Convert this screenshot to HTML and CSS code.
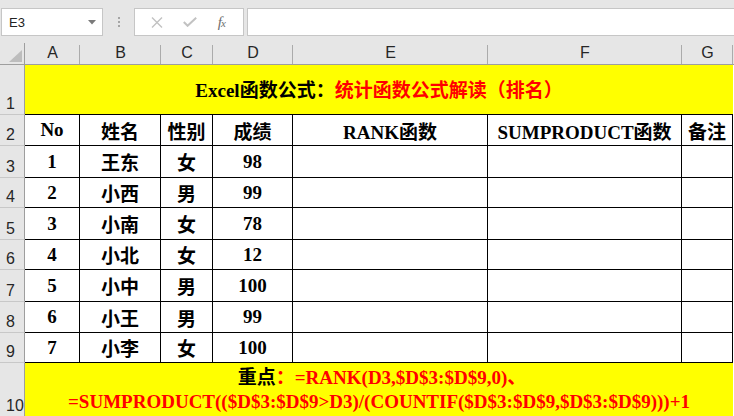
FILE: index.html
```html
<!DOCTYPE html>
<html lang="zh-CN">
<head>
<meta charset="utf-8">
<title>Excel</title>
<link rel="stylesheet" href="styles.css">
</head>
<body>
<div class="app">
  <div class="toolbar">
    <div class="namebox">
      <span class="ref">E3</span>
      <svg class="dd" width="8" height="5" viewBox="0 0 8 5"><path d="M0 0H8L4 4.5Z" fill="#7a7a7a"/></svg>
    </div>
    <div class="grip"><i></i><i></i><i></i></div>
    <div class="fxbox">
      <svg class="ico" width="12" height="11" viewBox="0 0 12 11"><path d="M1 0.5L11 10.5M11 0.5L1 10.5" stroke="#c2c2c2" stroke-width="1.4" fill="none"/></svg>
      <svg class="ico" width="14" height="10" viewBox="0 0 14 10"><path d="M0.8 5L4.6 8.8L13.2 0.8" stroke="#c2c2c2" stroke-width="2" fill="none"/></svg>
      <span class="fx">f<small>x</small></span>
    </div>
    <div class="formula"></div>
  </div>

  <div class="sheet">
    <div class="corner"><svg width="13" height="12" viewBox="0 0 13 12"><path d="M13 0V12H0Z" fill="#bdbdbd"/></svg></div>
    <div class="ch">A</div>
    <div class="ch">B</div>
    <div class="ch">C</div>
    <div class="ch">D</div>
    <div class="ch">E</div>
    <div class="ch">F</div>
    <div class="ch">G</div>
    <div class="ch last"></div>

    <div class="rh">1</div>
    <div class="title"><span class="blk">Excel函数公式：</span><span class="red">统计函数公式解读（排名）</span></div>
    <div class="pad"></div>

    <div class="rh">2</div>
    <div class="c">No</div>
    <div class="c">姓名</div>
    <div class="c">性别</div>
    <div class="c">成绩</div>
    <div class="c">RANK函数</div>
    <div class="c">SUMPRODUCT函数</div>
    <div class="c">备注</div>
    <div class="pad"></div>

    <div class="rh">3</div>
    <div class="c">1</div><div class="c">王东</div><div class="c">女</div><div class="c">98</div><div class="c"></div><div class="c"></div><div class="c"></div>
    <div class="pad"></div>

    <div class="rh">4</div>
    <div class="c">2</div><div class="c">小西</div><div class="c">男</div><div class="c">99</div><div class="c"></div><div class="c"></div><div class="c"></div>
    <div class="pad"></div>

    <div class="rh">5</div>
    <div class="c">3</div><div class="c">小南</div><div class="c">女</div><div class="c">78</div><div class="c"></div><div class="c"></div><div class="c"></div>
    <div class="pad"></div>

    <div class="rh">6</div>
    <div class="c">4</div><div class="c">小北</div><div class="c">女</div><div class="c">12</div><div class="c"></div><div class="c"></div><div class="c"></div>
    <div class="pad"></div>

    <div class="rh">7</div>
    <div class="c">5</div><div class="c">小中</div><div class="c">男</div><div class="c">100</div><div class="c"></div><div class="c"></div><div class="c"></div>
    <div class="pad"></div>

    <div class="rh">8</div>
    <div class="c">6</div><div class="c">小王</div><div class="c">男</div><div class="c">99</div><div class="c"></div><div class="c"></div><div class="c"></div>
    <div class="pad"></div>

    <div class="rh">9</div>
    <div class="c">7</div><div class="c">小李</div><div class="c">女</div><div class="c">100</div><div class="c"></div><div class="c"></div><div class="c"></div>
    <div class="pad"></div>

    <div class="rh">10</div>
    <div class="note">
      <span class="l1"><span class="blk">重点</span><span class="red">：=RANK(D3,$D$3:$D$9,0)、</span></span>
      <span class="l2 red">=SUMPRODUCT(($D$3:$D$9&gt;D3)/(COUNTIF($D$3:$D$9,$D$3:$D$9)))+1</span>
    </div>
    <div class="pad"></div>
  </div>
</div>
</body>
</html>
```

FILE: styles.css
```css
* { box-sizing: border-box; }
html, body { margin: 0; padding: 0; }
body {
  width: 734px;
  height: 416px;
  overflow: hidden;
  background: #e6e6e6;
  font-family: "Liberation Sans", "Noto Sans CJK SC", sans-serif;
}
.app { width: 734px; height: 416px; overflow: hidden; }

/* formula bar */
.toolbar {
  height: 43px;
  display: flex;
  align-items: flex-start;
  padding-top: 8px;
  padding-left: 1px;
}
.namebox {
  width: 102px;
  height: 28px;
  background: #fff;
  border: 1px solid #c6c6c6;
  display: flex;
  align-items: center;
  justify-content: space-between;
  padding: 0 6px 0 7px;
  font-size: 13px;
  color: #222;
}
.grip {
  width: 31px;
  height: 28px;
  display: flex;
  flex-direction: column;
  align-items: center;
  justify-content: center;
  gap: 2px;
}
.grip i { display: block; width: 2px; height: 2px; background: #a5a5a5; }
.fxbox {
  width: 110px;
  height: 28px;
  background: #fff;
  border: 1px solid #c6c6c6;
  display: flex;
  align-items: center;
  justify-content: space-around;
  padding: 0 8px 0 6px;
}
.fx {
  font-family: "Liberation Serif", serif;
  font-style: italic;
  font-size: 15px;
  color: #6e6e6e;
  letter-spacing: -1px;
}
.fx small { font-size: 11px; }
.formula {
  flex: 1;
  height: 28px;
  margin-left: 3px;
  background: #fff;
  border: 1px solid #c6c6c6;
  border-right: none;
}

/* sheet grid */
.sheet {
  display: grid;
  grid-template-columns: 25px 55px 81px 52px 80px 195px 194px 51px 1px;
  grid-template-rows: 22px 50px 31px 32px 30px 32px 30px 32px 31px 30px 54px;
  background: #fff;
}
.corner {
  background: #e6e6e6;
  border-right: 1px solid #9e9e9e;
  border-bottom: 1px solid #9e9e9e;
  display: flex;
  align-items: flex-end;
  justify-content: flex-end;
  padding: 0 2px 2px 0;
}
.ch {
  background: #e6e6e6 linear-gradient(#ababab, #ababab) right bottom / 1px 19px no-repeat;
  border-bottom: 1px solid #9e9e9e;
  display: flex;
  align-items: flex-end;
  justify-content: center;
  padding-bottom: 2px;
  font-size: 16px;
  line-height: 18px;
  color: #262626;
}
.ch.last { background: #e6e6e6; }
.rh {
  background: #e6e6e6;
  border-right: 1px solid #9e9e9e;
  border-bottom: 1px solid #c8c8c8;
  display: flex;
  align-items: flex-end;
  padding: 0 0 1px 6px;
  font-size: 16px;
  line-height: 18px;
  color: #262626;
}
.pad { background: #fff; }

.title, .note, .c {
  font-family: "Liberation Serif", "Noto Sans CJK SC", serif;
  font-weight: bold;
  font-size: 19px;
  color: #000;
}
.title {
  grid-column: span 7;
  background: #ffff00;
  border-bottom: 1px solid #000;
  display: flex;
  align-items: center;
  justify-content: center;
  padding-bottom: 3px;
}
.red { color: #ff0000; }
.blk { color: #000; }
.c {
  border-right: 1px solid #000;
  border-bottom: 1px solid #000;
  display: flex;
  align-items: center;
  justify-content: center;
  white-space: nowrap;
}
.note {
  grid-column: span 7;
  background: #ffff00;
  display: flex;
  flex-direction: column;
  align-items: center;
  justify-content: center;
  line-height: 24px;
  padding-bottom: 1px;
  white-space: nowrap;
}
.l1 { padding-left: 6px; }
```
